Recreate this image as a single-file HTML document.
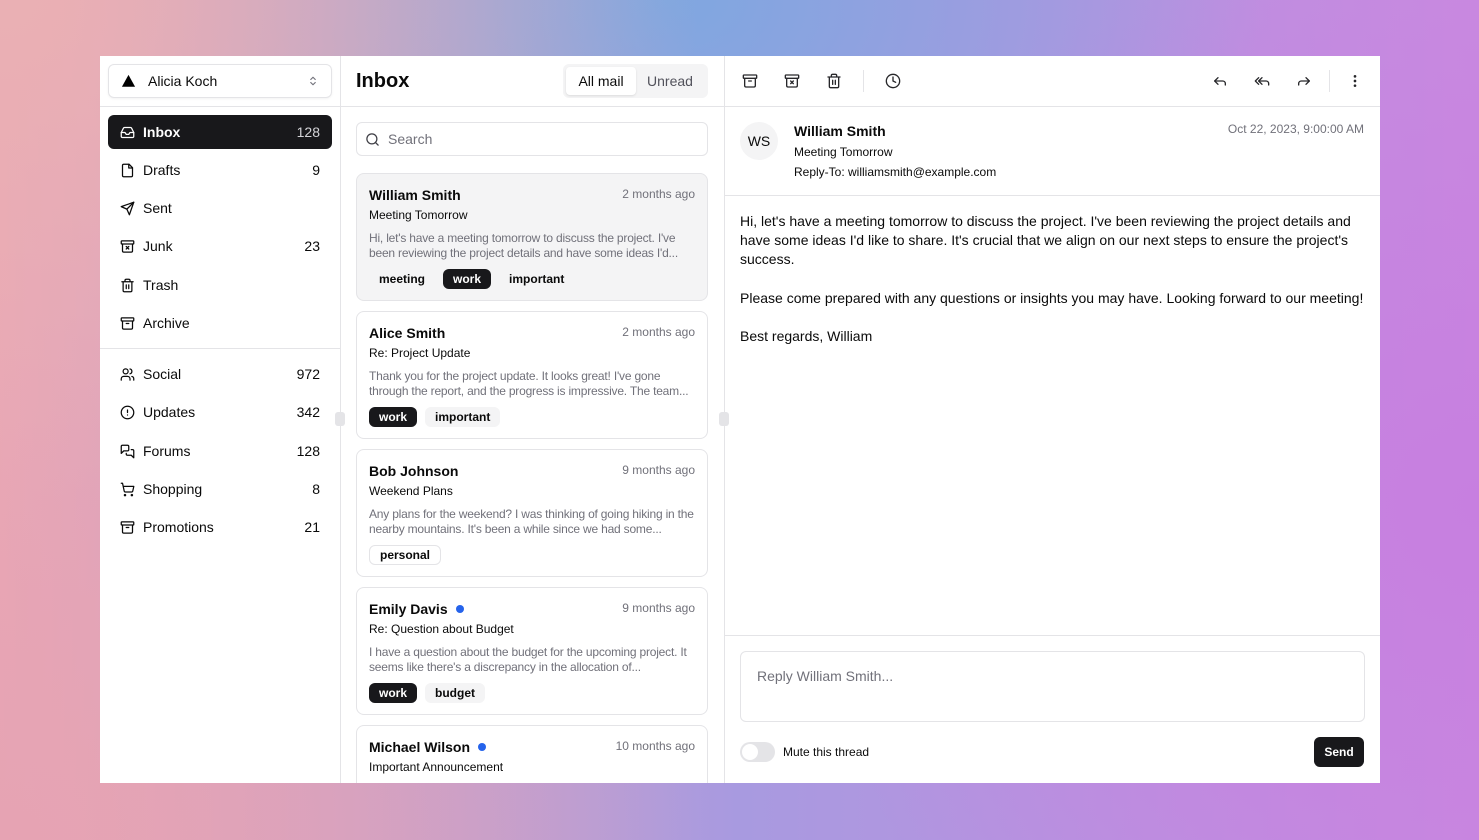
<!DOCTYPE html>
<html><head><meta charset="utf-8"><style>
*{box-sizing:border-box;margin:0;padding:0}
body{width:1479px;height:840px;overflow:hidden;font-family:"Liberation Sans",sans-serif;color:#0a0a0a;
background:radial-gradient(ellipse 700px 500px at 0% 0%,#eab0b4,transparent),radial-gradient(ellipse 600px 400px at 45% 0%,#7fa7e0,transparent),radial-gradient(ellipse 700px 600px at 100% 60%,#c77fe0,transparent),radial-gradient(ellipse 700px 500px at 0% 100%,#e6a3b3,transparent),linear-gradient(90deg,#e9a7b5,#a89ae0 50%,#c98ae0);position:relative}
.card{position:absolute;left:100px;top:56px;width:1280px;height:727px;background:#fff;overflow:hidden}
.abs{position:absolute}
svg{fill:none;stroke:currentColor;stroke-width:2;stroke-linecap:round;stroke-linejoin:round}
.nav{position:absolute;left:8px;width:224px;height:34px;border-radius:6px;font-size:14px;display:flex;align-items:center;padding:0 12px 0 12px}
.nav svg{width:15px;height:15px;margin-right:8px}
.nav .c{margin-left:auto}
.nav.act{background:#18181b;color:#fff}
.nav.act .c{color:#d4d4d8}
.m{position:absolute;left:256px;width:352px;height:128px;border:1px solid #e4e4e7;border-radius:8px;padding:0 12px}
.m .n{position:absolute;top:13px;left:12px;font-size:14px;font-weight:bold}
.m .t{position:absolute;top:13px;right:12px;font-size:12px;color:#71717a}
.m .s{position:absolute;top:34px;left:12px;font-size:12px}
.m .p{position:absolute;top:57px;left:12px;right:12px;font-size:12px;color:#71717a;line-height:15px;letter-spacing:-0.2px;display:-webkit-box;-webkit-line-clamp:2;-webkit-box-orient:vertical;overflow:hidden;height:30px}
.m .tg{position:absolute;top:95px;left:12px;display:flex;gap:8px}
.tag{font-size:12px;font-weight:bold;padding:3px 10px;border-radius:6px;background:#f4f4f5;height:20px;line-height:14px}
.tag.d{background:#18181b;color:#fff}
.tag.o{background:#fff;border:1px solid #e4e4e7;line-height:12px}
.dot{display:inline-block;width:8px;height:8px;border-radius:50%;background:#2563eb;margin-left:8px;vertical-align:1px}
.ic{position:absolute;top:17px;width:16px;height:16px;color:#27272a}
</style></head><body>
<div class="card">
<div class="abs" style="left:240px;top:0;width:1px;height:727px;background:#e4e4e7"></div>
<div class="abs" style="left:624px;top:0;width:1px;height:727px;background:#e4e4e7"></div>
<div class="abs" style="left:0;top:50px;width:240px;height:1px;background:#e4e4e7"></div>
<div class="abs" style="left:0;top:292px;width:240px;height:1px;background:#e4e4e7"></div>
<div class="abs" style="left:8px;top:8px;width:224px;height:34px;border:1px solid #e4e4e7;border-radius:6px;box-shadow:0 1px 2px rgba(0,0,0,.05);font-size:14px;display:flex;align-items:center;padding:0 12px">
<svg viewBox="0 0 16 16" style="width:15px;height:14px;margin-right:12px"><path d="M8 1L15.5 14.5H.5Z" fill="#000" stroke="none"/></svg>Alicia Koch
<svg viewBox="0 0 16 16" style="width:12px;height:12px;margin-left:auto;color:#71717a;stroke-width:1.5"><path d="M5 6l3-3 3 3M5 10l3 3 3-3"/></svg></div>

<div class="nav act" style="top:59px"><svg viewBox="0 0 24 24"><path d="M22 12h-6l-2 3h-4l-2-3H2"/><path d="M5.45 5.11 2 12v6a2 2 0 0 0 2 2h16a2 2 0 0 0 2-2v-6l-3.45-6.89A2 2 0 0 0 16.76 4H7.24a2 2 0 0 0-1.79 1.11z"/></svg><b>Inbox</b><span class="c">128</span></div>
<div class="nav" style="top:97px"><svg viewBox="0 0 24 24"><path d="M14.5 2H6a2 2 0 0 0-2 2v16a2 2 0 0 0 2 2h12a2 2 0 0 0 2-2V7.5L14.5 2z"/><path d="M14 2v6h6"/></svg>Drafts<span class="c">9</span></div>
<div class="nav" style="top:135px"><svg viewBox="0 0 24 24"><path d="m22 2-7 20-4-9-9-4Z"/><path d="M22 2 11 13"/></svg>Sent</div>
<div class="nav" style="top:173px"><svg viewBox="0 0 24 24"><rect x="2" y="3" width="20" height="5" rx="1"/><path d="M4 8v11a2 2 0 0 0 2 2h12a2 2 0 0 0 2-2V8M10 12l4 4M14 12l-4 4"/></svg>Junk<span class="c">23</span></div>
<div class="nav" style="top:212px"><svg viewBox="0 0 24 24"><path d="M3 6h18M19 6v14a2 2 0 0 1-2 2H7a2 2 0 0 1-2-2V6M8 6V4a2 2 0 0 1 2-2h4a2 2 0 0 1 2 2v2M10 11v6M14 11v6"/></svg>Trash</div>
<div class="nav" style="top:250px"><svg viewBox="0 0 24 24"><rect x="2" y="3" width="20" height="5" rx="1"/><path d="M4 8v11a2 2 0 0 0 2 2h12a2 2 0 0 0 2-2V8M10 12h4"/></svg>Archive</div>

<div class="nav" style="top:301px"><svg viewBox="0 0 24 24"><circle cx="9" cy="7" r="4"/><path d="M16 21v-2a4 4 0 0 0-4-4H6a4 4 0 0 0-4 4v2M16 3.13a4 4 0 0 1 0 7.75M22 21v-2a4 4 0 0 0-3-3.87"/></svg>Social<span class="c">972</span></div>
<div class="nav" style="top:339px"><svg viewBox="0 0 24 24"><circle cx="12" cy="12" r="10"/><path d="M12 8v4M12 16h.01"/></svg>Updates<span class="c">342</span></div>
<div class="nav" style="top:378px"><svg viewBox="0 0 24 24"><path d="M14 9a2 2 0 0 1-2 2H6l-4 4V4a2 2 0 0 1 2-2h8a2 2 0 0 1 2 2z"/><path d="M18 9h2a2 2 0 0 1 2 2v11l-4-4h-6a2 2 0 0 1-2-2v-1"/></svg>Forums<span class="c">128</span></div>
<div class="nav" style="top:416px"><svg viewBox="0 0 24 24"><circle cx="8" cy="21" r="1"/><circle cx="19" cy="21" r="1"/><path d="M2.05 2.05h2l2.66 12.42a2 2 0 0 0 2 1.58h9.78a2 2 0 0 0 1.95-1.57l1.65-7.43H5.12"/></svg>Shopping<span class="c">8</span></div>
<div class="nav" style="top:454px"><svg viewBox="0 0 24 24"><rect x="2" y="3" width="20" height="5" rx="1"/><path d="M4 8v11a2 2 0 0 0 2 2h12a2 2 0 0 0 2-2V8M10 12h4"/></svg>Promotions<span class="c">21</span></div>

<div class="abs" style="left:235px;top:356px;width:10px;height:14px;background:#e4e4e7;border-radius:3px"></div>
<div class="abs" style="left:619px;top:356px;width:10px;height:14px;background:#e4e4e7;border-radius:3px"></div>

<div class="abs" style="left:240px;top:50px;width:384px;height:1px;background:#e4e4e7"></div>
<div class="abs" style="left:256px;top:14px;font-size:20px;font-weight:bold">Inbox</div>
<div class="abs" style="left:463px;top:8px;width:145px;height:34px;background:#f4f4f5;border-radius:6px"></div>
<div class="abs" style="left:466px;top:11px;width:70px;height:28px;background:#fff;border-radius:4px;box-shadow:0 1px 2px rgba(0,0,0,.1);font-size:14px;text-align:center;line-height:28px">All mail</div>
<div class="abs" style="left:536px;top:11px;width:68px;height:28px;font-size:14px;color:#52525b;text-align:center;line-height:28px">Unread</div>
<div class="abs" style="left:256px;top:66px;width:352px;height:34px;border:1px solid #e4e4e7;border-radius:6px;font-size:14px;color:#71717a;padding-left:31px;line-height:32px">Search
<svg viewBox="0 0 24 24" style="position:absolute;left:8px;top:9px;width:15px;height:15px;color:#3f3f46"><circle cx="11" cy="11" r="8"/><path d="m21 21-4.3-4.3"/></svg></div>

<div class="m" style="top:117px;background:#f4f4f5"><div class="n">William Smith</div><div class="t">2 months ago</div><div class="s">Meeting Tomorrow</div><div class="p">Hi, let's have a meeting tomorrow to discuss the project. I've been reviewing the project details and have some ideas I'd...</div><div class="tg"><span class="tag" style="background:transparent">meeting</span><span class="tag d">work</span><span class="tag" style="background:transparent">important</span></div></div>
<div class="m" style="top:255px"><div class="n">Alice Smith</div><div class="t">2 months ago</div><div class="s">Re: Project Update</div><div class="p">Thank you for the project update. It looks great! I've gone through the report, and the progress is impressive. The team...</div><div class="tg"><span class="tag d">work</span><span class="tag">important</span></div></div>
<div class="m" style="top:393px"><div class="n">Bob Johnson</div><div class="t">9 months ago</div><div class="s">Weekend Plans</div><div class="p">Any plans for the weekend? I was thinking of going hiking in the nearby mountains. It's been a while since we had some...</div><div class="tg"><span class="tag o">personal</span></div></div>
<div class="m" style="top:531px"><div class="n">Emily Davis<span class="dot"></span></div><div class="t">9 months ago</div><div class="s">Re: Question about Budget</div><div class="p">I have a question about the budget for the upcoming project. It seems like there's a discrepancy in the allocation of...</div><div class="tg"><span class="tag d">work</span><span class="tag">budget</span></div></div>
<div class="m" style="top:669px"><div class="n">Michael Wilson<span class="dot"></span></div><div class="t">10 months ago</div><div class="s">Important Announcement</div></div>

<div class="abs" style="left:625px;top:50px;width:655px;height:1px;background:#e4e4e7"></div>
<svg class="ic" viewBox="0 0 24 24" style="left:642px"><rect x="2" y="3" width="20" height="5" rx="1"/><path d="M4 8v11a2 2 0 0 0 2 2h12a2 2 0 0 0 2-2V8M10 12h4"/></svg>
<svg class="ic" viewBox="0 0 24 24" style="left:684px"><rect x="2" y="3" width="20" height="5" rx="1"/><path d="M4 8v11a2 2 0 0 0 2 2h12a2 2 0 0 0 2-2V8M10 12l4 4M14 12l-4 4"/></svg>
<svg class="ic" viewBox="0 0 24 24" style="left:726px"><path d="M3 6h18M19 6v14a2 2 0 0 1-2 2H7a2 2 0 0 1-2-2V6M8 6V4a2 2 0 0 1 2-2h4a2 2 0 0 1 2 2v2M10 11v6M14 11v6"/></svg>
<div class="abs" style="left:763px;top:14px;width:1px;height:22px;background:#e4e4e7"></div>
<svg class="ic" viewBox="0 0 24 24" style="left:785px"><circle cx="12" cy="12" r="10"/><path d="M12 6v6l4 2"/></svg>
<svg class="ic" viewBox="0 0 24 24" style="left:1112px"><path d="M9 17 4 12l5-5"/><path d="M20 18v-2a4 4 0 0 0-4-4H4"/></svg>
<svg class="ic" viewBox="0 0 24 24" style="left:1154px"><path d="M7 17 2 12l5-5"/><path d="M12 17l-5-5 5-5"/><path d="M22 18v-2a4 4 0 0 0-4-4H7"/></svg>
<svg class="ic" viewBox="0 0 24 24" style="left:1196px"><path d="m15 17 5-5-5-5"/><path d="M4 18v-2a4 4 0 0 1 4-4h12"/></svg>
<div class="abs" style="left:1229px;top:14px;width:1px;height:22px;background:#e4e4e7"></div>
<svg class="ic" viewBox="0 0 24 24" style="left:1247px"><circle cx="12" cy="5" r="1"/><circle cx="12" cy="12" r="1"/><circle cx="12" cy="19" r="1"/></svg>

<div class="abs" style="left:640px;top:66px;width:38px;height:38px;border-radius:50%;background:#f4f4f5;font-size:14px;text-align:center;line-height:38px">WS</div>
<div class="abs" style="left:694px;top:67px;font-size:14px;font-weight:bold">William Smith</div>
<div class="abs" style="left:694px;top:89px;font-size:12px">Meeting Tomorrow</div>
<div class="abs" style="left:694px;top:109px;font-size:12px">Reply-To: williamsmith@example.com</div>
<div class="abs" style="right:16px;top:66px;font-size:12px;color:#71717a">Oct 22, 2023, 9:00:00 AM</div>
<div class="abs" style="left:625px;top:139px;width:655px;height:1px;background:#e4e4e7"></div>
<div class="abs" style="left:640px;top:156px;width:630px;font-size:14px;line-height:19.2px">Hi, let's have a meeting tomorrow to discuss the project. I've been reviewing the project details and have some ideas I'd like to share. It's crucial that we align on our next steps to ensure the project's success.<br><br>Please come prepared with any questions or insights you may have. Looking forward to our meeting!<br><br>Best regards, William</div>
<div class="abs" style="left:625px;top:579px;width:655px;height:1px;background:#e4e4e7"></div>
<div class="abs" style="left:640px;top:595px;width:625px;height:71px;border:1px solid #e4e4e7;border-radius:6px;font-size:14px;color:#71717a;padding:16px 16px">Reply William Smith...</div>
<div class="abs" style="left:640px;top:686px;width:35px;height:20px;border-radius:10px;background:#e4e4e7"><div style="position:absolute;left:2px;top:2px;width:16px;height:16px;border-radius:50%;background:#fff"></div></div>
<div class="abs" style="left:683px;top:689px;font-size:12px">Mute this thread</div>
<div class="abs" style="left:1214px;top:681px;width:50px;height:30px;background:#18181b;color:#fff;border-radius:6px;font-size:12px;font-weight:bold;text-align:center;line-height:30px">Send</div>
</div>
</body></html>
